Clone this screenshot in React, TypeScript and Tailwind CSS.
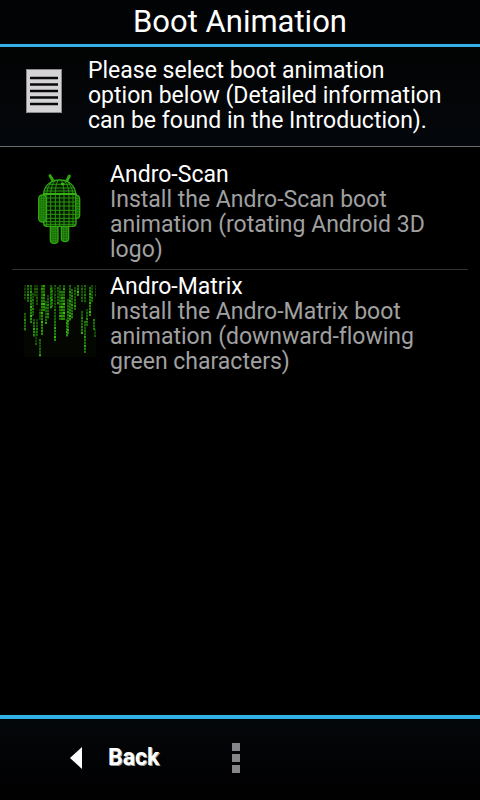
const streams = [
  [0, 0, 15, 0.4],
  [0, 28, 46, 0.8],
  [3, 0, 16, 0.8],
  [6, 0, 38, 1],
  [8, 8, 30, 0.6],
  [10, 0, 12, 0.5],
  [9, 34, 52, 0.9],
  [11, 46, 60, 0.4],
  [12, 0, 20, 0.5],
  [12, 34, 50, 0.6],
  [15, 24, 34, 0.5],
  [15, 54, 72, 0.7],
  [17, 0, 49, 1],
  [19, 0, 26, 1],
  [21, 16, 38, 0.7],
  [23, 10, 34, 0.7],
  [26, 0, 24, 0.9],
  [27, 2, 22, 0.7],
  [30, 0, 30, 0.5],
  [30, 30, 55, 0.9],
  [33, 2, 20, 0.6],
  [35, 0, 34, 0.7],
  [37, 6, 35, 1],
  [39, 0, 35, 1],
  [42, 34, 52, 1],
  [43, 14, 48, 0.8],
  [45, 0, 36, 0.9],
  [47, 4, 34, 0.8],
  [50, 2, 24, 0.7],
  [53, 0, 10, 1],
  [57, 0, 16, 0.6],
  [57, 26, 49, 0.8],
  [60, 0, 18, 0.6],
  [60, 36, 68, 0.8],
  [62, 24, 40, 0.7],
  [65, 2, 30, 1],
  [67, 0, 16, 0.6],
  [69, 34, 44, 0.8],
  [71, 0, 12, 0.4],
  [70, 44, 52, 0.5],
];

const options = [
  {
    name: "Andro-Scan",
    text: "Install the Andro-Scan boot animation (rotating Android 3D logo)",
    icon: <AndroidIcon />,
  },
  {
    name: "Andro-Matrix",
    text: "Install the Andro-Matrix boot animation (downward-flowing green characters)",
    icon: <MatrixIcon />,
  },
];

function NoteIcon() {
  return (
    <svg width="36" height="44" viewBox="0 0 36 44" aria-hidden="true">
      <path fill="#8a8a8c" d="M0 0h36v44H0z" />
      <path fill="#d6d3d6" d="M1 1h34v42H1z" />
      <path
        stroke="#08090b"
        strokeWidth="2.4"
        d="M4 9h28M4 15.5h28M4 22h28M4 28.5h28M4 35h28"
      />
    </svg>
  );
}

function AndroidIcon() {
  return (
    <svg width="72" height="72" viewBox="-18 16 216 216" fill="none" aria-hidden="true">
      <g stroke="#2fa80e" strokeWidth="9" strokeLinecap="round">
        <path d="M60 24l9 15M118 25l-7 14" />
      </g>
      <g stroke="#30aa10" strokeWidth="4" fill="#051c02">
        <path d="M41 79C42 56 60 37 89 37s47 19 48 42z" />
        <path d="M41 79h97v88q0 9-9 9H50q-9 0-9-9z" />
        <path d="M138 83q11-1 11 12v46q0 11-11 12z" />
      </g>
      <g stroke="#2a960e" strokeWidth="3">
        <path d="M58 50h62M48 61h82M43 70h92M74 41q-11 12-12 38M84 38q-8 14-8 41M94 38q8 14 8 41M104 41q12 12 13 38M63 44Q51 58 50 79M115 45q13 14 14 34" />
        <path d="M41 91h97M41 103h97M41 115h97M41 128h97M41 140h97M41 152h97M41 162h97M41 170h97" />
        <path d="M50 79v96M62 79v97M76 79v97M89 79v97M102 79v97M117 79v97M129 79v96" />
        <path d="M139 92h10M139 100h10M139 108h10M139 116h10M139 124h10M139 132h10M139 140h10M144 84v67" />
      </g>
      <ellipse cx="98" cy="49" rx="6" ry="4" fill="#39b616" />
      <path stroke="#3abb16" strokeWidth="5" d="M40 79h99" />
      <g stroke="#30a810" strokeWidth="4" fill="#186808">
        <rect x="26" y="82" width="23" height="81" rx="11" />
        <path d="M61 177h23v39q0 11-11.500 11T61 216z" />
        <path d="M94 177h22v34q0 11-11 11t-11-11z" />
      </g>
      <g stroke="#2c9412" strokeWidth="2">
        <path d="M28 92h20M27 99h22M27 106h22M27 113h22M27 120h22M27 127h22M27 134h22M27 141h22M27 148h22M29 155h18M34 84v76M41 84v76" />
        <path d="M61 184h23M61 191h23M61 198h23M61 205h23M61 212h23M63 219h19M69 177v48M76 177v48" />
        <path d="M94 184h22M94 191h22M94 198h22M94 205h22M96 213h18M101 177v43M109 177v43" />
      </g>
    </svg>
  );
}

function MatrixIcon() {
  return (
    <svg width="72" height="72" viewBox="0 0 72 72" aria-hidden="true">
      <path fill="#040602" d="M0 0h72v72H0z" />
      {streams.map(([x, top, bottom, light], i) => {
        const cells = [];
        for (let y = top; y < bottom; y += 3) {
          const noise = ((x * 31 + y * 17 + i * 13) % 11) / 11;
          const fade = 0.3 + (0.4 * (y - top)) / (bottom - top);
          cells.push(
            <rect
              key={y}
              x={x}
              y={y}
              width="2"
              height="2"
              fill={noise > 0.7 ? "#44d010" : "#2fa80c"}
              opacity={light * (fade + noise * 0.35)}
            />
          );
        }
        return (
          <g key={i}>
            <rect x={x} y={top} width="2" height={bottom - top} fill="#155c06" opacity={light * 0.7} />
            {cells}
          </g>
        );
      })}
    </svg>
  );
}

export default function App() {
  return (
    <div className="flex min-h-screen flex-col bg-black font-[Roboto,sans-serif] text-white [font-variant-ligatures:none]">
      <header className="border-b-3 border-[#33b0e6] bg-[#020304]">
        <h1 className="text-center text-[31px] leading-[44px]">Boot Animation</h1>
      </header>

      <section className="flex items-start gap-[26px] border-b border-[#6b6b6b] bg-linear-to-b from-[#020303] to-[#04070c] pt-[11px] pr-9 pb-[13px] pl-[26px]">
        <div className="shrink-0 pt-[11px]">
          <NoteIcon />
        </div>
        <p className="text-[23px] leading-[25px]">
          Please select boot animation option below (Detailed information can
          be found in the Introduction).
        </p>
      </section>

      <main className="flex-1 px-3 pt-[11px]">
        <ul className="divide-y divide-[#333333]">
          {options.map((option) => (
            <li key={option.name}>
              <button
                type="button"
                className="flex w-full items-start gap-3.5 pt-1 pr-6 pb-[7px] pl-3 text-left text-[23px] leading-[25px]"
              >
                <span className="shrink-0 pt-[11px]">{option.icon}</span>
                <span>
                  <span className="block">{option.name}</span>
                  <span className="block text-[#a0a0a0]">{option.text}</span>
                </span>
              </button>
            </li>
          ))}
        </ul>
      </main>

      <footer className="flex h-[85px] items-center border-t-4 border-[#33b0e6] bg-linear-to-b from-[#04070a] to-[#010102] pb-1">
        <button
          type="button"
          className="flex items-center gap-[26px] pl-[70px] text-[23px] leading-[25px] font-bold [text-shadow:1px_1px_0_#9a9a9a]"
        >
          <svg width="12" height="22" viewBox="0 0 12 22" aria-hidden="true">
            <path fill="#fff" d="M12 0v22L0 11z" />
          </svg>
          Back
        </button>
        <button type="button" aria-label="Menu" className="ml-[73px]">
          <svg width="8" height="30" viewBox="0 0 8 30" aria-hidden="true">
            <path fill="#86868a" d="M0 0h8v8H0zM0 11h8v8H0zM0 22h8v8H0z" />
          </svg>
        </button>
      </footer>
    </div>
  );
}
